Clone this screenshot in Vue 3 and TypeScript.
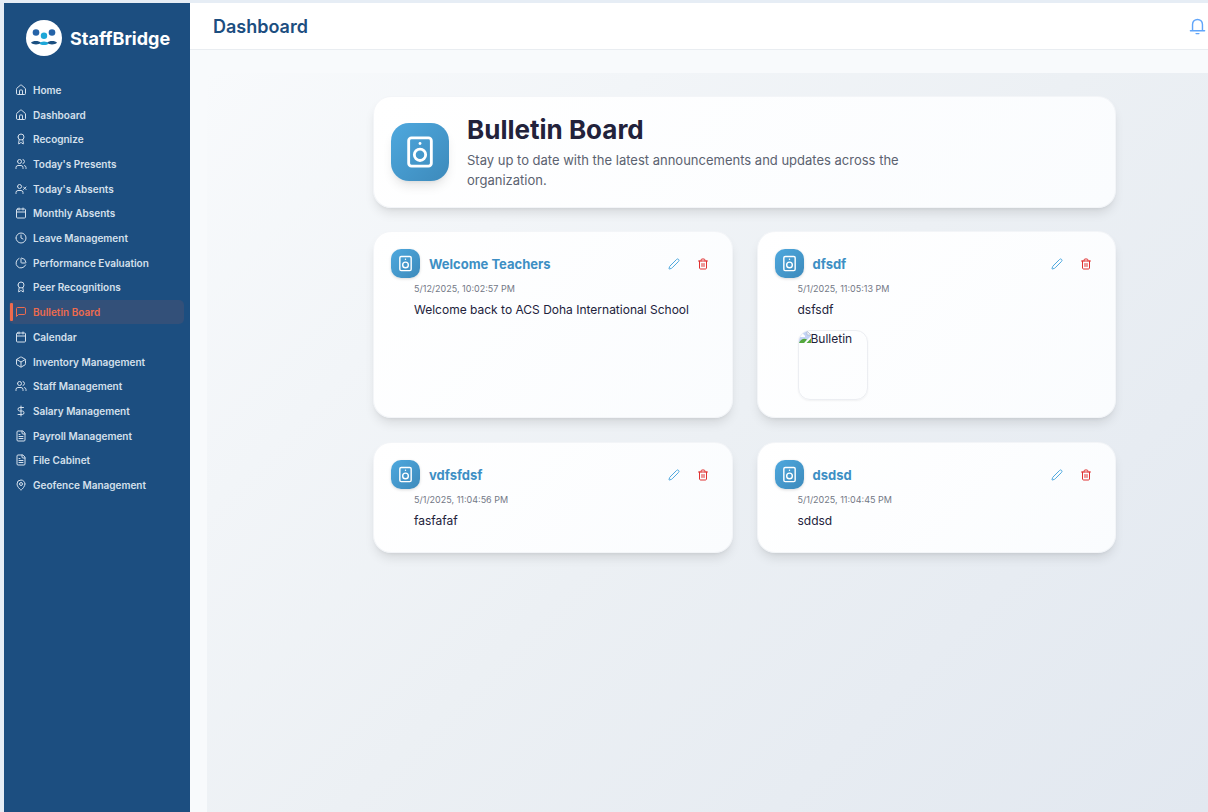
<script setup lang="ts">
type IconName =
  | 'home' | 'award' | 'users' | 'userX' | 'calendar' | 'clock' | 'pie' | 'message'
  | 'box' | 'dollar' | 'file' | 'pin' | 'speaker' | 'pencil' | 'trash' | 'bell'

const icons: Record<IconName, string[]> = {
  home: [
    'M15 21v-8a1 1 0 0 0-1-1h-4a1 1 0 0 0-1 1v8',
    'M3 10a2 2 0 0 1 .709-1.528l7-5.999a2 2 0 0 1 2.582 0l7 5.999A2 2 0 0 1 21 10v9a2 2 0 0 1-2 2H5a2 2 0 0 1-2-2z',
  ],
  award: [
    'm15.477 12.89 1.515 8.526a.5.5 0 0 1-.81.47l-3.58-2.687a1 1 0 0 0-1.197 0l-3.586 2.686a.5.5 0 0 1-.81-.469l1.514-8.526',
    'M6 8a6 6 0 1 0 12 0a6 6 0 1 0-12 0',
  ],
  users: [
    'M16 21v-2a4 4 0 0 0-4-4H6a4 4 0 0 0-4 4v2',
    'M5 7a4 4 0 1 0 8 0a4 4 0 1 0-8 0',
    'M22 21v-2a4 4 0 0 0-3-3.87',
    'M16 3.13a4 4 0 0 1 0 7.75',
  ],
  userX: [
    'M16 21v-2a4 4 0 0 0-4-4H6a4 4 0 0 0-4 4v2',
    'M5 7a4 4 0 1 0 8 0a4 4 0 1 0-8 0',
    'm17 8 5 5',
    'm22 8-5 5',
  ],
  calendar: [
    'M8 2v4', 'M16 2v4', 'M3 10h18',
    'M5 4h14a2 2 0 0 1 2 2v14a2 2 0 0 1-2 2H5a2 2 0 0 1-2-2V6a2 2 0 0 1 2-2z',
  ],
  clock: ['M2 12a10 10 0 1 0 20 0a10 10 0 1 0-20 0', 'M12 6v6l4 2'],
  pie: [
    'M21 12c.552 0 1.005-.449.95-.998a10 10 0 0 0-8.953-8.951c-.55-.055-.998.398-.998.95v8a1 1 0 0 0 1 1z',
    'M21.21 15.89A10 10 0 1 1 8 2.83',
  ],
  message: ['M21 15a2 2 0 0 1-2 2H7l-4 4V5a2 2 0 0 1 2-2h14a2 2 0 0 1 2 2z'],
  box: [
    'M21 8a2 2 0 0 0-1-1.73l-7-4a2 2 0 0 0-2 0l-7 4A2 2 0 0 0 3 8v8a2 2 0 0 0 1 1.73l7 4a2 2 0 0 0 2 0l7-4A2 2 0 0 0 21 16Z',
    'm3.3 7 8.7 5 8.7-5',
    'M12 22V12',
  ],
  dollar: ['M12 2v20', 'M17 5H9.5a3.5 3.5 0 0 0 0 7h5a3.5 3.5 0 0 1 0 7H6'],
  file: [
    'M15 2H6a2 2 0 0 0-2 2v16a2 2 0 0 0 2 2h12a2 2 0 0 0 2-2V7Z',
    'M14 2v4a2 2 0 0 0 2 2h4', 'M10 9H8', 'M16 13H8', 'M16 17H8',
  ],
  pin: [
    'M20 10c0 4.993-5.539 10.193-7.399 11.799a1 1 0 0 1-1.202 0C9.539 20.193 4 14.993 4 10a8 8 0 0 1 16 0',
    'M9 10a3 3 0 1 0 6 0a3 3 0 1 0-6 0',
  ],
  speaker: [
    'M6 2h12a2 2 0 0 1 2 2v16a2 2 0 0 1-2 2H6a2 2 0 0 1-2-2V4a2 2 0 0 1 2-2z',
    'M12 6h.01',
    'M8 14a4 4 0 1 0 8 0a4 4 0 1 0-8 0',
  ],
  pencil: ['M21.174 6.812a1 1 0 0 0-3.986-3.987L3.842 16.174a2 2 0 0 0-.5.83l-1.321 4.352a.5.5 0 0 0 .623.622l4.353-1.32a2 2 0 0 0 .83-.497z'],
  trash: [
    'M3 6h18', 'M19 6v14c0 1-1 2-2 2H7c-1 0-2-1-2-2V6',
    'M8 6V4c0-1 1-2 2-2h4c1 0 2 1 2 2v2', 'M10 11v6', 'M14 11v6',
  ],
  bell: ['M5 17V9a7 7 0 0 1 14 0v8', 'M2 18h20', 'M10 22h4'],
}

interface NavItem { label: string; icon: IconName; active?: boolean }

const nav: NavItem[] = [
  { label: 'Home', icon: 'home' },
  { label: 'Dashboard', icon: 'home' },
  { label: 'Recognize', icon: 'award' },
  { label: "Today's Presents", icon: 'users' },
  { label: "Today's Absents", icon: 'userX' },
  { label: 'Monthly Absents', icon: 'calendar' },
  { label: 'Leave Management', icon: 'clock' },
  { label: 'Performance Evaluation', icon: 'pie' },
  { label: 'Peer Recognitions', icon: 'award' },
  { label: 'Bulletin Board', icon: 'message', active: true },
  { label: 'Calendar', icon: 'calendar' },
  { label: 'Inventory Management', icon: 'box' },
  { label: 'Staff Management', icon: 'users' },
  { label: 'Salary Management', icon: 'dollar' },
  { label: 'Payroll Management', icon: 'file' },
  { label: 'File Cabinet', icon: 'file' },
  { label: 'Geofence Management', icon: 'pin' },
]

interface Bulletin { title: string; date: string; body: string; image?: string }

const bulletins: Bulletin[] = [
  { title: 'Welcome Teachers', date: '5/12/2025, 10:02:57 PM', body: 'Welcome back to ACS Doha International School' },
  { title: 'dfsdf', date: '5/1/2025, 11:05:13 PM', body: 'dsfsdf', image: 'Bulletin' },
  { title: 'vdfsfdsf', date: '5/1/2025, 11:04:56 PM', body: 'fasfafaf' },
  { title: 'dsdsd', date: '5/1/2025, 11:04:45 PM', body: 'sddsd' },
]
</script>

<template>
  <div class="app">
    <aside class="sidebar">
      <div class="brand">
        <svg class="logo" viewBox="0 0 36 36" aria-hidden="true">
          <circle cx="18" cy="18" r="18" fill="#fff" />
          <circle cx="10" cy="12.5" r="3.3" fill="#2563a8" />
          <circle cx="26" cy="12.5" r="3.3" fill="#2563a8" />
          <path d="M5 22.700C6.500 20.300 13 20.300 15 22.700C13 25 7 25 5 22.700Z" fill="#1b4f80" />
          <path d="M21 22.700C23 20.300 29.500 20.300 31 22.700C29 25 23 25 21 22.700Z" fill="#1b4f80" />
          <circle cx="18" cy="15.700" r="3.200" fill="#1ea7d8" />
          <path d="M13.500 23.500C14.500 20.800 21.500 20.800 22.500 23.500C21 25.600 15 25.600 13.500 23.500Z" fill="#1ea7d8" />
        </svg>
        <span class="brand-name">StaffBridge</span>
      </div>
      <nav class="nav" aria-label="Main">
        <a v-for="item in nav" :key="item.label" href="#" class="nav-link" :class="{ active: item.active }">
          <svg class="icon nav-icon" viewBox="0 0 24 24" aria-hidden="true">
            <path v-for="d in icons[item.icon]" :key="d" :d="d" />
          </svg>
          <span>{{ item.label }}</span>
        </a>
      </nav>
    </aside>

    <div class="main">
      <header class="topbar">
        <h2 class="page-title">Dashboard</h2>
        <button type="button" class="bell" aria-label="Notifications">
          <svg class="icon" viewBox="0 0 24 24" aria-hidden="true">
            <path v-for="d in icons.bell" :key="d" :d="d" />
          </svg>
        </button>
      </header>

      <main class="panel">
        <div class="content">
          <section class="card hero">
            <div class="badge badge-lg">
              <svg class="icon" viewBox="0 0 24 24" aria-hidden="true">
                <path v-for="d in icons.speaker" :key="d" :d="d" />
              </svg>
            </div>
            <div class="hero-text">
              <h1>Bulletin Board</h1>
              <p>Stay up to date with the latest announcements and updates across the organization.</p>
            </div>
          </section>

          <section class="grid">
            <article v-for="b in bulletins" :key="b.title" class="card bulletin">
              <div class="bulletin-head">
                <div class="badge">
                  <svg class="icon" viewBox="0 0 24 24" aria-hidden="true">
                    <path v-for="d in icons.speaker" :key="d" :d="d" />
                  </svg>
                </div>
                <h3>{{ b.title }}</h3>
                <div class="actions">
                  <button type="button" class="edit" :aria-label="`Edit ${b.title}`">
                    <svg class="icon" viewBox="0 0 24 24" aria-hidden="true">
                      <path v-for="d in icons.pencil" :key="d" :d="d" />
                    </svg>
                  </button>
                  <button type="button" class="delete" :aria-label="`Delete ${b.title}`">
                    <svg class="icon" viewBox="0 0 24 24" aria-hidden="true">
                      <path v-for="d in icons.trash" :key="d" :d="d" />
                    </svg>
                  </button>
                </div>
              </div>
              <div class="bulletin-body">
                <time>{{ b.date }}</time>
                <p>{{ b.body }}</p>
                <div v-if="b.image" class="thumb">
                  <svg class="missing" viewBox="0 0 12 12" aria-hidden="true">
                    <path d="M0 0H8L12 4V5L5 12H0Z" fill="#c3d3f5" />
                    <path d="M8 0V4H12Z" fill="#eef2fb" stroke="#a9b4c8" stroke-width=".6" />
                    <path d="M1 5a2 2 0 0 1 4-1a1.5 1.5 0 0 1 1 2H1Z" fill="#fff" />
                    <path d="M0 12C2 8 5 7 8 8.500L5 12Z" fill="#54a83c" />
                    <path d="M12 7.500V12H7.500Z" fill="#54a83c" />
                  </svg>
                  <span>{{ b.image }}</span>
                </div>
              </div>
            </article>
          </section>
        </div>
      </main>
    </div>
  </div>
</template>

<style>
body {
  background: #e6edf5;
}
</style>

<style scoped>
.app {
  display: flex;
  box-sizing: border-box;
  min-height: 100vh;
  padding: 3px 0 0 4px;
  overflow: hidden;
  font-family: Inter, "Liberation Sans", sans-serif;
  color: #1f2937;
}
h1, h2, h3, p {
  margin: 0;
}
button {
  display: flex;
  padding: 0;
  border: 0;
  background: none;
  cursor: pointer;
}
.icon {
  fill: none;
  stroke: currentColor;
  stroke-width: 2;
  stroke-linecap: round;
  stroke-linejoin: round;
}
.sidebar {
  flex: 0 0 186px;
  background: #1c4e80;
}
.brand {
  display: flex;
  align-items: center;
  gap: 8px;
  padding: 17px 0 0 22px;
}
.logo {
  width: 36px;
  height: 36px;
}
.brand-name {
  font-size: 18px;
  font-weight: 700;
  color: #fff;
}
.nav {
  display: grid;
  grid-auto-rows: 1fr;
  height: 420px;
  margin: 22px 6px 0 5px;
}
.nav-link {
  position: relative;
  display: flex;
  align-items: center;
  gap: 6px;
  margin-bottom: 1px;
  padding-left: 6px;
  border-radius: 5px;
  font-size: 10px;
  font-weight: 600;
  color: #d5e0ec;
  text-decoration: none;
}
.nav-link.active {
  background: #335079;
  color: #ee6b4e;
}
.nav-link.active::before {
  content: "";
  position: absolute;
  left: 1px;
  top: 3px;
  bottom: 3px;
  width: 3px;
  border-radius: 1px;
  background: #ee6b4e;
}
.nav-icon {
  width: 12px;
  height: 12px;
}
.main {
  flex: 1;
  display: flex;
  flex-direction: column;
  min-width: 0;
  background: #f8fafc;
}
.topbar {
  display: flex;
  align-items: center;
  justify-content: space-between;
  height: 46px;
  padding: 0 2px 0 23px;
  border-bottom: 1px solid #e9edf1;
  background: #fff;
}
.page-title {
  font-size: 18px;
  font-weight: 600;
  color: #1c4e80;
}
.bell {
  color: #60a5fa;
}
.bell .icon {
  width: 17px;
  height: 17px;
}
.panel {
  flex: 1;
  margin: 23px 0 0 17px;
  padding: 23px 0 24px 74px;
  background: linear-gradient(135deg, #f8fafc 0%, #ecf0f4 50%, #e2e8f0 100%);
}
.content {
  max-width: 743px;
  margin: 0 auto;
}
.card {
  box-sizing: border-box;
  border: 1px solid #f3f5f8;
  border-radius: 18px;
  background: linear-gradient(135deg, #fff, #fafcfe);
  box-shadow: 0 7px 11px -2px rgba(0, 0, 0, .1), 0 3px 4px -3px rgba(0, 0, 0, .1);
}
.hero {
  display: flex;
  align-items: center;
  gap: 18px;
  padding: 17px;
}
.badge {
  display: grid;
  place-items: center;
  flex: none;
  width: 29px;
  height: 29px;
  border-radius: 10px;
  background: linear-gradient(135deg, #4ea8de, #3d8abb);
  color: #fff;
  box-shadow: 0 1px 3px rgba(0, 0, 0, .15);
}
.badge .icon {
  width: 17px;
  height: 17px;
}
.badge-lg {
  width: 58px;
  height: 58px;
  border-radius: 18px;
  box-shadow: 0 7px 11px -2px rgba(0, 0, 0, .1), 0 3px 4px -3px rgba(0, 0, 0, .1);
}
.badge-lg .icon {
  width: 34px;
  height: 34px;
}
.hero-text h1 {
  font-size: 26px;
  line-height: 31px;
  font-weight: 700;
  color: #22223b;
}
.hero-text p {
  max-width: 490px;
  margin-top: 5px;
  font-size: 13px;
  line-height: 20px;
  color: #5b6270;
}
.grid {
  display: grid;
  grid-template-columns: 1fr 1fr;
  gap: 24px;
  margin-top: 23px;
}
.bulletin {
  min-height: 111px;
  padding: 17px 23px 17px 17px;
}
.bulletin-head {
  display: flex;
  align-items: center;
  gap: 9px;
}
.bulletin-head h3 {
  flex: 1;
  font-size: 13px;
  font-weight: 700;
  color: #3d8fc4;
}
.actions {
  display: flex;
  gap: 17px;
}
.actions .icon {
  width: 12px;
  height: 12px;
}
.edit {
  color: #4ea8de;
}
.delete {
  color: #e03131;
}
.bulletin-body {
  padding: 5px 0 0 23px;
}
time {
  display: block;
  font-size: 9px;
  line-height: 12px;
  color: #737886;
}
.bulletin-body p {
  margin-top: 6px;
  font-size: 12px;
  line-height: 18px;
  color: #22223b;
}
.thumb {
  display: flex;
  box-sizing: border-box;
  width: 70px;
  height: 70px;
  margin-top: 11px;
  overflow: hidden;
  border: 1px solid #eceef2;
  border-radius: 12px;
  box-shadow: 0 1px 2px rgba(0, 0, 0, .05);
  font-size: 12px;
  line-height: 16px;
  color: #22223b;
}
.missing {
  flex: none;
  width: 12px;
  height: 12px;
}
</style>
